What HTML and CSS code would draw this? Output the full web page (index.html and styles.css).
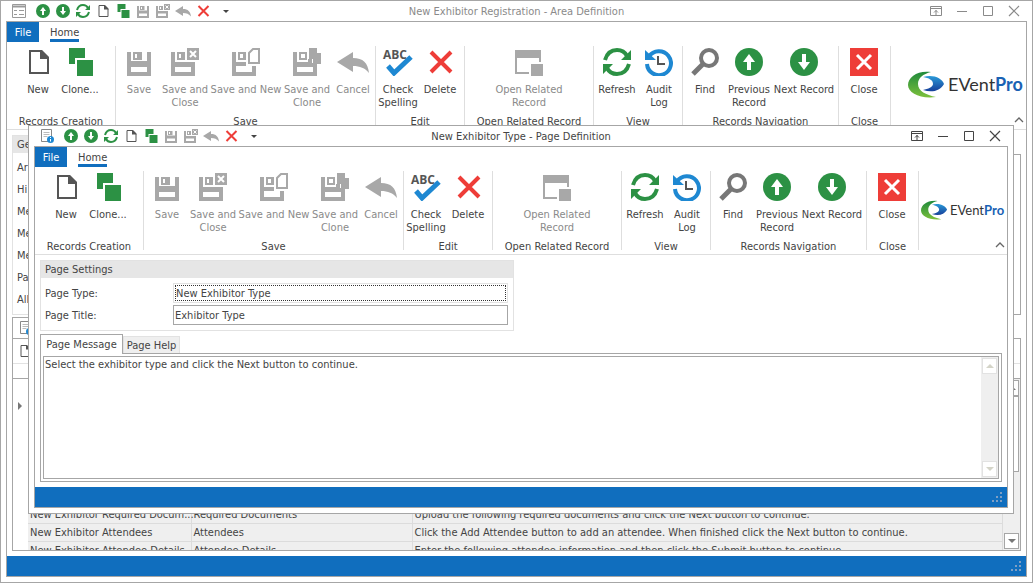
FILE: index.html
```html
<!DOCTYPE html>
<html lang="en">
<head>
<meta charset="utf-8">
<title>New Exhibitor Type - Page Definition</title>
<link rel="stylesheet" href="styles.css">
</head>
<body>
<svg class="defs" aria-hidden="true">
  <symbol id="i-form" viewBox="0 0 14 14"><path d="M.5.5h13v13H.5z" fill="#fff" stroke="#999"/><path d="M1 2.500h12" stroke="#999" stroke-width="2"/><path d="M2 6.500h3M2 10.500h3M7 6.500h5M7 10.500h5" stroke="#999" fill="none"/></symbol>
  <symbol id="i-page" viewBox="0 0 14 14"><path d="M1.500.5h10v12h-10z" fill="#fff" stroke="#888"/><path d="M3.500 3.500h6M3.500 5.500h6M3.500 7.500h4" stroke="#bbb"/><circle cx="10.500" cy="10.500" r="3.500" fill="#1e88d2"/><path d="M10.500 8v1M10.500 10v2.500" stroke="#fff"/></symbol>
  <symbol id="i-up" viewBox="0 0 28 28"><circle cx="14" cy="14" r="14" fill="#2c9144"/><path d="M14 6l6 8h-4v8h-4v-8H8z" fill="#fff"/></symbol>
  <symbol id="i-down" viewBox="0 0 28 28"><circle cx="14" cy="14" r="14" fill="#2c9144"/><path d="M14 22l6-8h-4V6h-4v8H8z" fill="#fff"/></symbol>
  <symbol id="i-refresh" viewBox="0 0 28 28"><g fill="none" stroke="#2c9144" stroke-width="4"><path d="M2 12C4 5 9 2 14 2c4 0 8 2 10 6"/><path d="M26 16c-2 7-7 10-12 10-4 0-8-2-10-6"/></g><path d="M28 2v10H18zM0 26V16h10z" fill="#2c9144"/></symbol>
  <symbol id="i-new" viewBox="0 0 28 28"><path d="M6 3h11l7 7v15H6z" fill="#fff" stroke="#555" stroke-width="2"/><path d="M16 2h2l7 7v2h-9z" fill="#555"/></symbol>
  <symbol id="i-clone" viewBox="0 0 28 28"><path d="M3 0h16v10H9v6H3z" fill="#2c9144"/><path d="M11 12h16v16H11z" fill="#2c9144"/></symbol>
  <symbol id="i-save" viewBox="0 0 28 28"><path fill-rule="evenodd" fill="#a8a8a8" d="M2 4h4v9h16V4h4v24H2zM6 19v5h16v-5zM8 4h9v8H8zM10 6v4h2V6z"/></symbol>
  <symbol id="i-saveclose" viewBox="0 0 28 28"><path fill-rule="evenodd" fill="#a8a8a8" d="M0 4h4v10h20v14H0zM4 19v5h16v-5zM6 4h8v8H6zM8 6v4h2V6z"/><path d="M16 0h12v12H16z" fill="#a8a8a8"/><path d="M19 3l6 6M25 3l-6 6" stroke="#fff" stroke-width="2"/></symbol>
  <symbol id="i-savenew" viewBox="0 0 28 28"><path fill-rule="evenodd" fill="#a8a8a8" d="M0 4h4v10h10v4H4v6h16v-6h4v10H0zM6 4h8v8H6zM8 6v4h3V6z"/><path d="M17 15V5l4-4h6v14z" fill="#fff" stroke="#a8a8a8" stroke-width="2"/></symbol>
  <symbol id="i-saveclone" viewBox="0 0 28 28"><path fill-rule="evenodd" fill="#a8a8a8" d="M0 4h4v10h11v-3h4v4h5v13H0zM4 19v5h16v-5zM6 4h8v8H6zM8 6v4h4V6z"/><path d="M16 0h8v5h5v11h-9v-5h-4z" fill="#a8a8a8"/></symbol>
  <symbol id="i-undo" viewBox="0 0 32 28"><path d="M0 14L16 4v6c10 0 15 5 16 15-4-5-9-7-16-7v6z" fill="#a8a8a8"/></symbol>
  <symbol id="i-check" viewBox="0 0 32 28"><path d="M6 18l6 7L29 9" fill="none" stroke="#1e88d2" stroke-width="5"/></symbol>
  <symbol id="i-x" viewBox="0 0 28 28"><path d="M5 4l20 20M25 4L5 24" stroke="#ee3d38" stroke-width="4"/></symbol>
  <symbol id="i-open" viewBox="0 0 28 28"><path d="M0 2h26v12h-2v-4H2v14h12v2H0z" fill="#a8a8a8"/><path d="M16 16h12v12H16z" fill="#a8a8a8"/></symbol>
  <symbol id="i-audit" viewBox="0 0 28 28"><path d="M4 8.500A12 12 0 1 1 2 16" fill="none" stroke="#1e88d2" stroke-width="4"/><path d="M0 2v10h11z" fill="#1e88d2"/><path d="M13 8v8h7" fill="none" stroke="#555" stroke-width="2"/></symbol>
  <symbol id="i-find" viewBox="0 0 28 28"><circle cx="18" cy="10" r="8" fill="none" stroke="#777" stroke-width="4"/><path d="M12 16L2 26" stroke="#777" stroke-width="5"/></symbol>
  <symbol id="i-close" viewBox="0 0 28 28"><path d="M0 0h28v28H0z" fill="#ee3d38"/><path d="M7 7l14 14M21 7L7 21" stroke="#fff" stroke-width="3"/></symbol>
  <symbol id="i-more" viewBox="0 0 14 14"><path d="M4 6h6l-3 3z" fill="#444"/></symbol>
  <symbol id="w-ribbon" viewBox="0 0 12 12"><path d="M.5 1.500h11v9H.5zM0 3.500h12M6 10V5M4 7.500l2-2 2 2" fill="none" stroke="currentColor"/></symbol>
  <symbol id="w-min" viewBox="0 0 12 12"><path d="M1 6.500h10" stroke="currentColor"/></symbol>
  <symbol id="w-max" viewBox="0 0 12 12"><path d="M1.500 1.500h9v9h-9z" fill="none" stroke="currentColor"/></symbol>
  <symbol id="w-close" viewBox="0 0 12 12"><path d="M1 1l10 10M11 1L1 11" stroke="currentColor" stroke-width="1.200"/></symbol>
  <symbol id="i-chev" viewBox="0 0 10 6"><path d="M1 5l4-4 4 4" fill="none" stroke="#666" stroke-width="1.300"/></symbol>
  <symbol id="i-grip" viewBox="0 0 10 10"><path d="M8 0h2v2H8zM4 4h2v2H4zM8 4h2v2H8zM0 8h2v2H0zM4 8h2v2H4zM8 8h2v2H8z" fill="#7f9fc4"/></symbol>
  <symbol id="i-tri-d" viewBox="0 0 8 4"><path d="M0 0h8L4 4z" fill="currentColor"/></symbol>
  <symbol id="i-tri-u" viewBox="0 0 8 4"><path d="M0 4h8L4 0z" fill="currentColor"/></symbol>
  <symbol id="i-tri-r" viewBox="0 0 4 8"><path d="M0 0v8l4-4z" fill="currentColor"/></symbol>
  <linearGradient id="g-green" x1="0" y1="0" x2="0" y2="1"><stop offset="0" stop-color="#1f8a3c"/><stop offset="1" stop-color="#7cc03c"/></linearGradient>
  <linearGradient id="g-blue" x1="0" y1="0" x2="0" y2="1"><stop offset="0" stop-color="#2a9ad8"/><stop offset="1" stop-color="#173f9a"/></linearGradient>
  <symbol id="swoosh" viewBox="0 0 36 28">
    <path d="M23 1C10-1 0 6 0 14c0 8 12 14 28 12C18 24 10 20 10 13 10 7 15 3 23 1z" fill="url(#g-green)"/>
    <path d="M15 6c10-3 19 1 21 7-4 7-12 9-21 6 5-1 10-3 10-6 0-4-4-6-10-7z" fill="url(#g-blue)"/>
  </symbol>
</svg>

<main class="window window-back">
  <header class="titlebar">
    <div class="quick">
      <svg class="q"><use href="#i-form"/></svg>
      <button aria-label="Previous"><svg class="q"><use href="#i-up"/></svg></button>
      <button aria-label="Next"><svg class="q"><use href="#i-down"/></svg></button>
      <button aria-label="Refresh"><svg class="q"><use href="#i-refresh"/></svg></button>
      <button aria-label="New"><svg class="q"><use href="#i-new"/></svg></button>
      <button aria-label="Clone"><svg class="q"><use href="#i-clone"/></svg></button>
      <button aria-label="Save"><svg class="q"><use href="#i-save"/></svg></button>
      <button aria-label="Save and close"><svg class="q"><use href="#i-saveclose"/></svg></button>
      <button aria-label="Cancel"><svg class="q q-wide"><use href="#i-undo"/></svg></button>
      <button aria-label="Delete"><svg class="q"><use href="#i-x"/></svg></button>
      <button class="more" aria-label="More"><svg class="q"><use href="#i-more"/></svg></button>
    </div>
    <h1 class="title">New Exhibitor Registration - Area Definition</h1>
    <div class="controls">
      <button aria-label="Ribbon display"><svg><use href="#w-ribbon"/></svg></button>
      <button aria-label="Minimize"><svg><use href="#w-min"/></svg></button>
      <button aria-label="Maximize"><svg><use href="#w-max"/></svg></button>
      <button aria-label="Close window"><svg><use href="#w-close"/></svg></button>
    </div>
  </header>
  <div class="frame">
    <nav class="tabs"><button class="file">File</button><button class="home">Home</button></nav>
    <div class="ribbon">
      <section class="group g-create"><div class="tools">
        <button class="w42"><svg><use href="#i-new"/></svg>New</button>
        <button class="w42"><svg><use href="#i-clone"/></svg>Clone...</button>
      </div><h2>Records Creation</h2></section>
      <section class="group g-save"><div class="tools">
        <button class="w44" disabled><svg><use href="#i-save"/></svg>Save</button>
        <button class="w48" disabled><svg><use href="#i-saveclose"/></svg>Save and<br>Close</button>
        <button class="w74" disabled><svg><use href="#i-savenew"/></svg>Save and New</button>
        <button class="w48" disabled><svg><use href="#i-saveclone"/></svg>Save and<br>Clone</button>
        <button class="w44" disabled><svg class="wide"><use href="#i-undo"/></svg>Cancel</button>
      </div><h2>Save</h2></section>
      <section class="group g-edit"><div class="tools">
        <button class="w44"><svg class="wide" viewBox="0 0 32 28"><use href="#i-check" width="32" height="28"/><text x="1" y="11" class="abc">ABC</text></svg>Check<br>Spelling</button>
        <button class="w40"><svg><use href="#i-x"/></svg>Delete</button>
      </div><h2>Edit</h2></section>
      <section class="group g-open"><div class="tools">
        <button class="w128" disabled><svg><use href="#i-open"/></svg>Open Related<br>Record</button>
      </div><h2>Open Related Record</h2></section>
      <section class="group g-view"><div class="tools">
        <button class="w44"><svg><use href="#i-refresh"/></svg>Refresh</button>
        <button class="w40"><svg><use href="#i-audit"/></svg>Audit<br>Log</button>
      </div><h2>View</h2></section>
      <section class="group g-nav"><div class="tools">
        <button class="w44"><svg><use href="#i-find"/></svg>Find</button>
        <button class="w44"><svg><use href="#i-up"/></svg>Previous<br>Record</button>
        <button class="w66"><svg><use href="#i-down"/></svg>Next Record</button>
      </div><h2>Records Navigation</h2></section>
      <section class="group g-close"><div class="tools">
        <button class="w50"><svg><use href="#i-close"/></svg>Close</button>
      </div><h2>Close</h2></section>
      <div class="brand"><svg class="logo" viewBox="0 0 116 28" role="img" aria-label="EventPro"><use href="#swoosh" width="36" height="28"/><text x="40" y="20" class="logo-a">EVent<tspan class="logo-b">Pro</tspan></text></svg>
        <button class="collapse" aria-label="Collapse ribbon"><svg><use href="#i-chev"/></svg></button></div>
    </div>
    <div class="area">
      <div class="area-top">
        <section class="settings">
          <h2>Ge</h2>
          <ul><li>Ar</li><li>Hi</li><li>Me</li><li>Me</li><li>Me</li><li>Pa</li><li>All</li></ul>
        </section>
        <div class="side-box"></div>
      </div>
      <div class="sheet-tab"><svg class="q"><use href="#i-page"/></svg></div>
      <section class="sheet">
        <div class="sheet-tools"><svg class="q"><use href="#i-new"/></svg></div>
        <div class="sheet-band"></div>
        <div class="grid">
          <div class="grid-mark"><svg><use href="#i-tri-r"/></svg></div>
          <div class="grid-rows">
            <table>
              <tr><td>New Exhibitor Required Docum...</td><td>Required Documents</td><td>Upload the following required documents and click the Next button to continue.</td></tr>
              <tr><td>New Exhibitor Attendees</td><td>Attendees</td><td>Click the Add Attendee button to add an attendee. When finished click the Next button to continue.</td></tr>
              <tr><td>New Exhibitor Attendee Details</td><td>Attendee Details</td><td>Enter the following attendee information and then click the Submit button to continue.</td></tr>
            </table>
          </div>
          <div class="vbar">
            <button aria-label="Scroll up"><svg><use href="#i-tri-u"/></svg></button>
            <div class="thumb"></div>
            <button class="last" aria-label="Scroll down"><svg><use href="#i-tri-d"/></svg></button>
          </div>
        </div>
      </section>
    </div>
    <footer class="status"><svg><use href="#i-grip"/></svg></footer>
  </div>
</main>

<div class="window window-front" role="dialog" aria-label="New Exhibitor Type">
  <header class="titlebar">
    <div class="quick">
      <svg class="q"><use href="#i-page"/></svg>
      <button aria-label="Previous"><svg class="q"><use href="#i-up"/></svg></button>
      <button aria-label="Next"><svg class="q"><use href="#i-down"/></svg></button>
      <button aria-label="Refresh"><svg class="q"><use href="#i-refresh"/></svg></button>
      <button aria-label="New"><svg class="q"><use href="#i-new"/></svg></button>
      <button aria-label="Clone"><svg class="q"><use href="#i-clone"/></svg></button>
      <button aria-label="Save"><svg class="q"><use href="#i-save"/></svg></button>
      <button aria-label="Save and close"><svg class="q"><use href="#i-saveclose"/></svg></button>
      <button aria-label="Cancel"><svg class="q q-wide"><use href="#i-undo"/></svg></button>
      <button aria-label="Delete"><svg class="q"><use href="#i-x"/></svg></button>
      <button class="more" aria-label="More"><svg class="q"><use href="#i-more"/></svg></button>
    </div>
    <h1 class="title">New Exhibitor Type - Page Definition</h1>
    <div class="controls">
      <button aria-label="Ribbon display"><svg><use href="#w-ribbon"/></svg></button>
      <button aria-label="Minimize"><svg><use href="#w-min"/></svg></button>
      <button aria-label="Maximize"><svg><use href="#w-max"/></svg></button>
      <button aria-label="Close window"><svg><use href="#w-close"/></svg></button>
    </div>
  </header>
  <div class="frame">
    <nav class="tabs"><button class="file">File</button><button class="home">Home</button></nav>
    <div class="ribbon">
      <section class="group g-create"><div class="tools">
        <button class="w42"><svg><use href="#i-new"/></svg>New</button>
        <button class="w42"><svg><use href="#i-clone"/></svg>Clone...</button>
      </div><h2>Records Creation</h2></section>
      <section class="group g-save"><div class="tools">
        <button class="w44" disabled><svg><use href="#i-save"/></svg>Save</button>
        <button class="w48" disabled><svg><use href="#i-saveclose"/></svg>Save and<br>Close</button>
        <button class="w74" disabled><svg><use href="#i-savenew"/></svg>Save and New</button>
        <button class="w48" disabled><svg><use href="#i-saveclone"/></svg>Save and<br>Clone</button>
        <button class="w44" disabled><svg class="wide"><use href="#i-undo"/></svg>Cancel</button>
      </div><h2>Save</h2></section>
      <section class="group g-edit"><div class="tools">
        <button class="w44"><svg class="wide" viewBox="0 0 32 28"><use href="#i-check" width="32" height="28"/><text x="1" y="11" class="abc">ABC</text></svg>Check<br>Spelling</button>
        <button class="w40"><svg><use href="#i-x"/></svg>Delete</button>
      </div><h2>Edit</h2></section>
      <section class="group g-open"><div class="tools">
        <button class="w128" disabled><svg><use href="#i-open"/></svg>Open Related<br>Record</button>
      </div><h2>Open Related Record</h2></section>
      <section class="group g-view"><div class="tools">
        <button class="w44"><svg><use href="#i-refresh"/></svg>Refresh</button>
        <button class="w40"><svg><use href="#i-audit"/></svg>Audit<br>Log</button>
      </div><h2>View</h2></section>
      <section class="group g-nav"><div class="tools">
        <button class="w44"><svg><use href="#i-find"/></svg>Find</button>
        <button class="w44"><svg><use href="#i-up"/></svg>Previous<br>Record</button>
        <button class="w66"><svg><use href="#i-down"/></svg>Next Record</button>
      </div><h2>Records Navigation</h2></section>
      <section class="group g-close"><div class="tools">
        <button class="w50"><svg><use href="#i-close"/></svg>Close</button>
      </div><h2>Close</h2></section>
      <div class="brand"><svg class="logo" viewBox="0 0 116 28" role="img" aria-label="EventPro"><use href="#swoosh" width="36" height="28"/><text x="40" y="20" class="logo-a">EVent<tspan class="logo-b">Pro</tspan></text></svg>
        <button class="collapse" aria-label="Collapse ribbon"><svg><use href="#i-chev"/></svg></button></div>
    </div>
    <div class="page">
      <section class="fieldset">
        <h2>Page Settings</h2>
        <div class="fields">
          <label for="ptype">Page Type:</label>
          <div class="focus-box"><input id="ptype" value="New Exhibitor Type"></div>
          <label for="ptitle">Page Title:</label>
          <input id="ptitle" class="boxed" value="Exhibitor Type">
        </div>
      </section>
      <div class="page-tabs" role="tablist">
        <button role="tab" class="tab active" aria-selected="true">Page Message</button>
        <button role="tab" class="tab">Page Help</button>
      </div>
      <div class="tab-panel">
        <div class="memo">
          <textarea aria-label="Page Message">Select the exhibitor type and click the Next button to continue.</textarea>
          <div class="vbar pale">
            <button aria-label="Scroll up"><svg><use href="#i-tri-u"/></svg></button>
            <button class="last" aria-label="Scroll down"><svg><use href="#i-tri-d"/></svg></button>
          </div>
        </div>
      </div>
    </div>
    <footer class="status"><svg><use href="#i-grip"/></svg></footer>
  </div>
</div>
</body>
</html>
```
FILE: styles.css
```css
* { box-sizing: border-box; }
html, body { height: 100%; margin: 0; }
body, button, input, textarea {
  font-family: "DejaVu Sans Condensed", "DejaVu Sans", sans-serif;
  font-size: 11px;
  line-height: 13px;
  color: #444;
}
body { position: relative; overflow: hidden; background: #fff; }
button { padding: 0; border: 0; background: none; }
svg { display: block; }
h1, h2, ul { margin: 0; padding: 0; font-size: 11px; font-weight: normal; list-style: none; }
.defs { position: absolute; width: 0; height: 0; }

/* windows */
.window {
  display: flex;
  flex-direction: column;
  background: #fff;
  border: 1px solid #a6a6a6;
  padding: 0 5px 5px;
}
.window-back { height: 100%; }
.window-front { position: absolute; left: 28px; top: 125px; right: 19px; bottom: 69px; }
.frame {
  flex: 1;
  min-height: 0;
  display: flex;
  flex-direction: column;
  border: 1px solid #a6a6a6;
}
.titlebar {
  display: grid;
  grid-template-columns: 1fr auto 1fr;
  align-items: center;
  height: 20px;
}
.window-back .title, .window-back .controls { color: #8a8a8a; }
.quick { display: flex; align-items: center; padding-left: 6px; }
.quick button { width: 20px; }
.quick > svg { margin-right: 7px; }
.quick button svg { margin: 0 auto; }
.quick .more { margin-left: 3px; }
.q { width: 14px; height: 14px; flex: none; }
.q-wide { width: 16px; }
.controls { display: flex; justify-content: flex-end; }
.controls button { width: 26px; color: inherit; }
.controls svg { width: 12px; height: 12px; margin: 0 auto; }

/* ribbon */
.tabs { display: flex; height: 20px; }
.file { width: 32px; background: #106ebe; color: #fff; }
.home { margin-left: 11px; height: 20px; padding-top: 3px; border-bottom: 3px solid #106ebe; }
.ribbon {
  display: flex;
  padding: 4px 0;
  border-bottom: 1px solid #dedede;
}
.group {
  flex: none;
  height: 79px;
  display: flex;
  flex-direction: column;
  justify-content: space-between;
  padding: 2px 0 0;
  border-right: 1px solid #dedede;
}
.group h2 { text-align: center; line-height: 7px; white-space: nowrap; }
.tools { display: flex; align-items: flex-start; }
.tools button { flex: none; white-space: nowrap; display: block; }
.tools button:disabled { color: #8a8a8a; }
.tools svg { width: 28px; height: 28px; margin: 0 auto 7px; overflow: visible; }
.tools svg.wide { width: 32px; }
.g-create { width: 109px; }
.g-create .tools { padding-left: 10px; }
.g-save { width: 260px; }
.g-save .tools { padding-left: 1px; }
.g-edit { width: 89px; }
.g-open { width: 129px; }
.g-view { width: 89px; }
.g-view .tools { padding-left: 1px; }
.g-nav { width: 156px; }
.g-close { width: 52px; }
.w40 { width: 40px; }
.w42 { width: 42px; }
.w44 { width: 44px; }
.w48 { width: 48px; }
.w50 { width: 50px; }
.w66 { width: 66px; }
.w74 { width: 74px; }
.w128 { width: 128px; }
.abc { font: bold 12px "Open Sans", sans-serif; fill: #555; }
.logo-a { font: 18px Lato, sans-serif; fill: #333; }
.logo-b { font-weight: bold; fill: #1a62b4; }
.brand {
  flex: 1;
  min-width: 0;
  display: flex;
  flex-direction: column;
  align-items: flex-end;
  justify-content: space-between;
}
.window-back .logo { width: 116px; height: 28px; margin: 25px 2px 0 0; overflow: visible; }
.window-front .logo { width: 84px; height: 21px; margin: 29px 2px 0 0; overflow: visible; }
.collapse { margin-right: 2px; }
.collapse svg { width: 10px; height: 6px; margin-bottom: 2px; }
.status {
  display: flex;
  justify-content: flex-end;
  align-items: flex-end;
  height: 20px;
  padding: 5px;
  background: #106ebe;
}
.status svg { width: 10px; height: 10px; }

/* area definition */
.area { flex: 1; min-height: 0; display: flex; flex-direction: column; padding: 5px; }
.area-top { display: flex; height: 180px; }
.settings { width: 50%; border: 1px solid #e2e2e2; }
.settings h2 { padding: 2px 4px 2px; background: #e6e6e6; }
.settings ul { display: grid; grid-auto-rows: 22px; align-items: center; padding: 3px 4px; }
.side-box { flex: 1; margin-top: 19px; border: 1px solid #a6a6a6; }
.sheet-tab { width: 50%; height: 22px; margin-top: 2px; padding: 3px 6px; border: 1px solid #a6a6a6; border-bottom: 0; }
.sheet { flex: 1; min-height: 0; display: flex; flex-direction: column; border: 1px solid #a6a6a6; margin-top: -1px; }
.sheet-tools { height: 25px; padding: 5px; border-bottom: 1px solid #e2e2e2; }
.sheet-band { height: 14px; }
.grid { flex: 1; min-height: 0; display: flex; border-top: 1px solid #a6a6a6; overflow: hidden; }
.grid-mark { width: 15px; padding: 23px 5px; color: #777; }
.grid-mark svg { width: 4px; height: 8px; }
.grid-rows { flex: 1; display: flex; flex-direction: column; justify-content: flex-end; }
.grid-rows table { width: 100%; margin-bottom: -10px; border-collapse: collapse; table-layout: fixed; background: #efefef; }
.grid-rows td { height: 18px; padding: 0 0 0 2px; border: 1px solid #dcdcdc; border-width: 0 1px 1px 0; white-space: nowrap; }
.grid-rows td:nth-child(1) { width: 163px; }
.grid-rows td:nth-child(2) { width: 221px; }

/* scroll bars */
.vbar { display: flex; flex-direction: column; width: 17px; padding: 1px; background: #efefef; }
.vbar button, .thumb { width: 15px; background: #fff; border: 1px solid #a6a6a6; color: #777; }
.vbar button { height: 16px; flex: none; }
.vbar svg { width: 8px; height: 4px; margin: 0 auto; }
.vbar .last { margin-top: auto; }
.thumb { height: 76px; }
.pale button { border-color: #e2e2e2; color: #d4d4c8; }

/* page definition */
.page { flex: 1; min-height: 0; display: flex; flex-direction: column; padding: 5px; }
.fieldset { width: 474px; border: 1px solid #e2e2e2; }
.fieldset h2 { padding: 2px 4px; line-height: 13px; background: #e6e6e6; }
.fields { display: grid; grid-template-columns: 128px 1fr; gap: 2px 0; align-items: center; padding: 5px 5px 5px 4px; }
.fields input { width: 100%; min-width: 0; height: 20px; padding: 0 1px; border: 0; background: #fff; outline: 0; }
.fields .focus-box { height: 20px; padding: 1px; border: 1px solid #e2e2e2; }
.fields .focus-box input { height: 16px; padding: 0; border: 1px dotted #333; }
.fields .boxed { border: 1px solid #a6a6a6; }
.page-tabs { display: flex; align-items: flex-end; margin-top: 3px; }
.tab { height: 17px; width: 57px; background: #efefef; border: 1px solid #e2e2e2; border-bottom: 0; white-space: nowrap; }
.tab.active { position: relative; z-index: 1; width: 83px; height: 20px; margin-bottom: -1px; background: #fff; border-color: #a6a6a6; }
.tab-panel { flex: 1; min-height: 0; display: flex; padding: 2px; border: 1px solid #a6a6a6; }
.memo { flex: 1; display: flex; border: 1px solid #a6a6a6; }
.memo textarea { flex: 1; min-width: 0; resize: none; border: 0; outline: 0; padding: 1px; overflow: hidden; background: #fff; }
```
